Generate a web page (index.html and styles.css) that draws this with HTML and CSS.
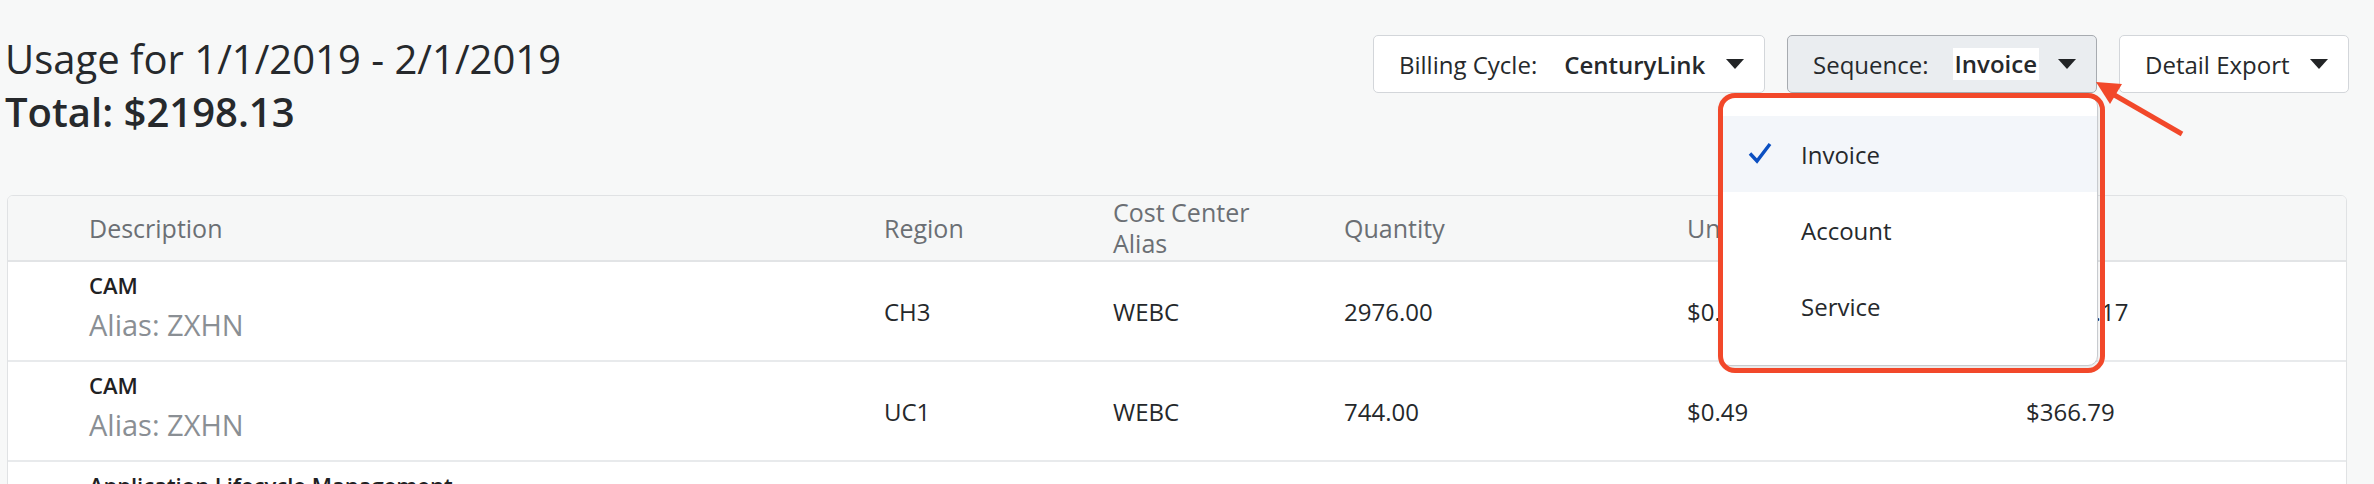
FILE: index.html
```html
<!DOCTYPE html>
<html lang="en">
<head>
<meta charset="utf-8">
<title>Usage</title>
<link rel="stylesheet" href="styles.css">
</head>
<body>
<div class="page">
  <header class="top">
    <div class="title">
      <h1 class="usage">Usage for 1/1/2019 - 2/1/2019</h1>
      <div class="total">Total: $2198.13</div>
    </div>
    <div class="actions">
      <div class="btn btn-billing">
        <span class="lbl">Billing Cycle:</span>
        <span class="val">CenturyLink</span>
        <span class="caret"></span>
      </div>
      <div class="seq-wrap">
        <div class="btn btn-active">
          <span class="lbl lbl-seq">Sequence:</span>
          <span class="val val-sel">Invoice</span>
          <span class="caret"></span>
        </div>
        <ul class="menu">
          <li class="menu-item is-selected">
            <svg class="check" viewBox="0 0 24 22" width="24" height="22"><path d="M2 11.5 L9 19 L22 2" fill="none" stroke="#0b4fc1" stroke-width="3.4" stroke-linejoin="miter"/></svg>
            <span>Invoice</span>
          </li>
          <li class="menu-item"><span>Account</span></li>
          <li class="menu-item"><span>Service</span></li>
        </ul>
        <div class="annot-box"></div>
      </div>
      <div class="btn btn-export">
        <span class="lbl">Detail Export</span>
        <span class="caret"></span>
      </div>
    </div>
  </header>

  <section class="table">
    <div class="row head">
      <div></div>
      <div>Description</div>
      <div>Region</div>
      <div class="cc">Cost Center Alias</div>
      <div>Quantity</div>
      <div>Unit Price</div>
      <div>Total</div>
    </div>
    <div class="row">
      <div></div>
      <div class="desc"><span class="name">CAM</span><span class="alias">Alias: ZXHN</span></div>
      <div>CH3</div>
      <div>WEBC</div>
      <div>2976.00</div>
      <div>$0.49</div>
      <div>$1458.17</div>
    </div>
    <div class="row">
      <div></div>
      <div class="desc"><span class="name">CAM</span><span class="alias">Alias: ZXHN</span></div>
      <div>UC1</div>
      <div>WEBC</div>
      <div>744.00</div>
      <div>$0.49</div>
      <div>$366.79</div>
    </div>
    <div class="row">
      <div></div>
      <div class="desc"><span class="name">Application Lifecycle Management</span><span class="alias">Alias: ZXHN</span></div>
      <div>VA1</div>
      <div>WEBC</div>
      <div>1.00</div>
      <div>$373.17</div>
      <div>$373.17</div>
    </div>
  </section>

  <svg class="annot-arrow" viewBox="0 0 100 66" width="100" height="66">
    <line x1="92" y1="59" x2="14" y2="14" stroke="#f2482a" stroke-width="5" stroke-linecap="butt"/>
    <polygon points="6,7 32,9 20,29" fill="#f2482a"/>
  </svg>
</div>
</body>
</html>
```

FILE: styles.css
```css
* { box-sizing: border-box; }

html, body {
  margin: 0;
  padding: 0;
  background: #f7f8f8;
}

body {
  font-family: "Open Sans", "Noto Sans", "Liberation Sans", sans-serif;
  color: #25282b;
  overflow: hidden;
}

.page {
  position: relative;
  padding: 0 25px 0 7px;
}

.top {
  display: flex;
  justify-content: space-between;
  align-items: flex-start;
}

.title {
  padding-top: 32px;
  margin-left: -2px;
}

.usage {
  margin: 0;
  font-size: 40px;
  font-weight: 400;
  line-height: 53px;
  color: #26292c;
}

.total {
  font-size: 40px;
  font-weight: 600;
  line-height: 53px;
  color: #26292c;
}

.actions {
  display: flex;
  gap: 22px;
  margin-top: 35px;
}

.btn {
  display: flex;
  align-items: center;
  height: 58px;
  padding: 0 0 0 25px;
  background: #ffffff;
  border: 1px solid #d3d6da;
  border-radius: 5px;
  font-size: 24px;
  color: #26292c;
  white-space: nowrap;
}

.btn-billing { width: 392px; }
.btn-export { width: 230px; }

.btn-active {
  width: 310px;
  background: #eaedf0;
  border-color: #a7abb0;
}

.lbl { margin-right: 27px; }
.btn-export .lbl { margin-right: 20px; }
.lbl-seq { margin-right: 24px; }

.val {
  font-weight: 600;
  margin-right: 21px;
}

.val-sel {
  background: #ffffff;
  padding: 0 2px;
  line-height: 32px;
  margin-right: 19px;
}

.caret {
  width: 0;
  height: 0;
  border-left: 9px solid transparent;
  border-right: 9px solid transparent;
  border-top: 10px solid #222426;
}

.seq-wrap {
  position: relative;
}

.menu {
  position: absolute;
  top: 61px;
  right: -1px;
  width: 378px;
  height: 270px;
  margin: 0;
  padding: 19px 0 0;
  list-style: none;
  background: #ffffff;
  border: 1px solid #c8cbcf;
  border-radius: 10px;
  box-shadow: 0 2px 4px rgba(0, 0, 0, 0.12);
  z-index: 5;
}

.menu-item {
  position: relative;
  height: 76px;
  display: flex;
  align-items: center;
  padding-left: 80px;
  font-size: 24px;
  color: #26292c;
}

.menu-item.is-selected {
  background: #f3f6fa;
}

.check {
  position: absolute;
  left: 27px;
  top: 26px;
}

.annot-box {
  position: absolute;
  left: -69px;
  top: 58px;
  width: 387px;
  height: 280px;
  border: 5px solid #f2482a;
  border-radius: 17px;
  z-index: 6;
  pointer-events: none;
}

.annot-arrow {
  position: absolute;
  left: 2090px;
  top: 75px;
  z-index: 7;
}

.table {
  margin-top: 57px;
  margin-right: 2px;
  background: #ffffff;
  border: 1px solid #e0e2e4;
  border-radius: 6px;
  overflow: hidden;
}

.row {
  display: grid;
  grid-template-columns: 81px 795px 229px 231px 343px 339px 1fr;
  align-items: center;
  height: 100px;
  border-bottom: 2px solid #e8eaec;
  font-size: 24px;
  color: #25282b;
}

.row.head {
  height: 66px;
  background: #f6f7f7;
  border-bottom: 2px solid #e2e4e6;
  font-size: 25px;
  color: #6b6f74;
}

.cc {
  max-width: 140px;
  line-height: 31px;
}

.desc {
  align-self: start;
  display: flex;
  flex-direction: column;
  padding-top: 8px;
}

.name {
  font-size: 22px;
  font-weight: 600;
  line-height: 30px;
  color: #1f2123;
}

.alias {
  font-size: 29px;
  line-height: 50px;
  color: #8a8f94;
}
```
